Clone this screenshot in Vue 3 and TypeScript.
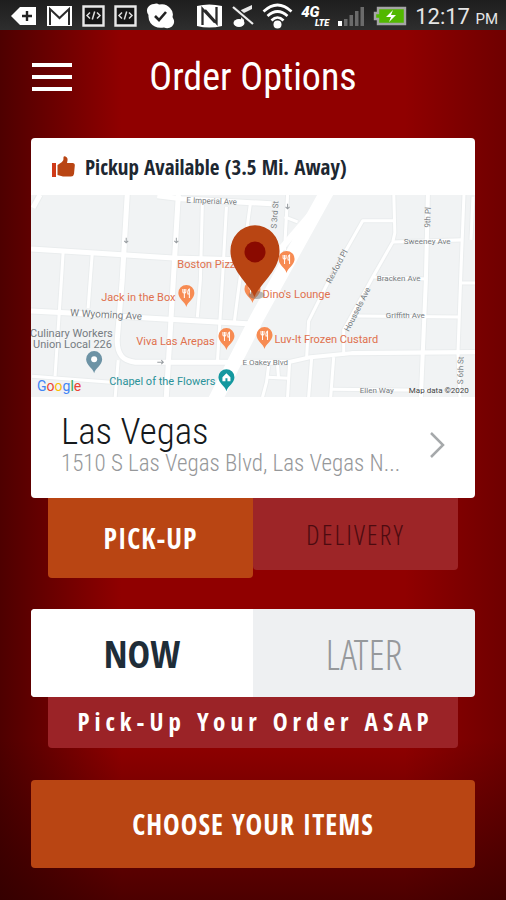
<script setup lang="ts">
import { computed, ref } from 'vue'

type Mode = 'pickup' | 'delivery'
type Timing = 'now' | 'later'

interface Label {
  text: string
  x: number
  y: number
  size?: number
  rotate?: number
  tone: 'street' | 'food' | 'place' | 'chapel' | 'credit'
}

interface Marker {
  x: number
  y: number
  kind: 'food' | 'place' | 'chapel'
}

const mode = ref<Mode>('pickup')
const timing = ref<Timing>('now')

const note = computed<string>(() => {
  const verb = mode.value === 'pickup' ? 'Pick-Up' : 'Deliver'
  return timing.value === 'now' ? `${verb} Your Order ASAP` : `${verb} Your Order Later`
})

// Map geometry, in the map's own coordinate space (443 x 202).
const roads: string[] = [
  'M96 0L91 85L86 145C86 160 92 166 104 167L257 167',
  'M147 0L142 85L135 202',
  'M0 54L142 63L216 65',
  'M0 116L39 118L116 123L220 129',
  'M9 0L2 13',
  'M126 1L150 4L240 9',
]
const lanes: string[] = [
  'M32 58L31 75L24 181',
  'M61 60L57 113',
  'M171 8L169 85L166 122',
  'M195 12L191 85L186 167',
  'M219 8L207 95L203 126',
  'M256 0L253 55',
  'M253 22L266 27',
  'M364 26L331 26L298 84L277 126L275 163',
  'M362 0L363 38L361 47L341 82L312 135L312 160',
  'M361 47L430 45',
  'M342 82L395 84',
  'M326 121L427 122',
  'M430 88L443 88',
  'M432 0L429 75L426 158L428 202',
  'M441 2L439 45',
  'M302 162L299 202',
  'M280 163L277 202',
  'M258 167L256 202',
  'M237 171L235 187L231 202',
  'M236 182L257 183',
  'M246 170L247 183',
  'M300 194L395 195',
  'M1 181L80 187',
  'M87 165L84 202',
]
const avenues: string[] = ['M396 0L394 85L389 202', 'M257 167L279 162L320 158L443 157']

const labels: Label[] = [
  { text: 'E Imperial Ave', x: 155, y: 8, rotate: 2, tone: 'street' },
  { text: 'S 3rd St', x: 245, y: 34, rotate: -86, tone: 'street' },
  { text: '9th Pl', x: 398, y: 33, rotate: -87, tone: 'street' },
  { text: 'Sweeney Ave', x: 372, y: 49, tone: 'street' },
  { text: 'Bracken Ave', x: 345, y: 86, tone: 'street' },
  { text: 'Griffith Ave', x: 354, y: 123, tone: 'street' },
  { text: 'Rexford Pl', x: 299, y: 89, rotate: -62, tone: 'street' },
  { text: 'Houssels Ave', x: 317, y: 137, rotate: -63, tone: 'street' },
  { text: 'W Wyoming Ave', x: 39, y: 121, size: 10, rotate: 3, tone: 'street' },
  { text: 'E Oakey Blvd', x: 211, y: 170, tone: 'street' },
  { text: 'Ellen Way', x: 328, y: 198, tone: 'street' },
  { text: 'S 6th St', x: 431, y: 189, rotate: -89, tone: 'street' },
  { text: 'Boston Pizza', x: 146, y: 73, tone: 'food' },
  { text: 'Jack in the Box', x: 70, y: 106, tone: 'food' },
  { text: "Dino's Lounge", x: 231, y: 103, tone: 'food' },
  { text: 'Viva Las Arepas', x: 105, y: 150, tone: 'food' },
  { text: 'Luv-It Frozen Custard', x: 243, y: 148, tone: 'food' },
  { text: 'Culinary Workers', x: -1, y: 142, tone: 'place' },
  { text: 'Union Local 226', x: 2, y: 153, tone: 'place' },
  { text: 'Chapel of the Flowers', x: 78, y: 190, tone: 'chapel' },
  { text: 'Map data ©2020', x: 377, y: 198, size: 8, tone: 'credit' },
]

const markers: Marker[] = [
  { x: 255, y: 78, kind: 'food' },
  { x: 155, y: 112, kind: 'food' },
  { x: 221, y: 108, kind: 'food' },
  { x: 195, y: 155, kind: 'food' },
  { x: 233, y: 154, kind: 'food' },
  { x: 63, y: 178, kind: 'place' },
  { x: 195, y: 196, kind: 'chapel' },
]
</script>

<template>
  <div class="screen">
    <div class="status" aria-label="Device status">
      <div class="status-group">
        <svg width="26" height="20" viewBox="0 0 26 20">
          <path d="M9 1H25V19H9L0 10Z" fill="#fff" />
          <path d="M16 5V15M11 10H21" stroke="#222" stroke-width="2.4" />
        </svg>
        <svg width="27" height="22" viewBox="0 0 27 22">
          <path d="M1 1H26V21H1Z" fill="#fff" />
          <path d="M4 20V4L13.500 13L23 4V20" fill="none" stroke="#2b2b2b" stroke-width="2" />
        </svg>
        <svg v-for="n in 2" :key="n" width="23" height="22" viewBox="0 0 23 22">
          <path d="M1.500 1.500H21.500V20.500H1.500Z" fill="#161616" stroke="#e8e8e8" stroke-width="2.400" />
          <path d="M8 7.500L5 10.500L8 13.500M15 7.500L18 10.500L15 13.500M12.700 6.500L10.300 14.500" fill="none" stroke="#ddd" stroke-width="1.500" />
        </svg>
        <svg width="29" height="26" viewBox="0 0 29 26">
          <path d="M8 1Q11 0 13 1.500Q20 0 24 5Q28 9 26.500 14Q30 20 26 23.500Q22 26.500 18 24.500Q9 26 4.500 20Q2 16 2.500 12Q0 9 1.500 5Q4 1 8 1Z" fill="#fff" />
          <path d="M9 13L13 17L20 9" fill="none" stroke="#222" stroke-width="2.600" />
        </svg>
      </div>
      <div class="status-group status-right">
        <svg width="29" height="26" viewBox="0 0 29 26">
          <path d="M2 3Q14 0 27 3V23Q14 26 2 23Z" fill="#fff" />
          <path d="M7.500 22V6L20 19.500M21.500 4V20L10 7" fill="none" stroke="#2a2a2a" stroke-width="2.300" />
        </svg>
        <svg width="22" height="24" viewBox="0 0 22 24">
          <path d="M9 17V6L20 1V5L12 9V18Z" fill="#e9e9e9" />
          <ellipse cx="7" cy="19" rx="5.500" ry="4" fill="#fff" />
          <path d="M1 3L21 20" stroke="#2a2a2a" stroke-width="5" />
          <path d="M1 3L21 20" stroke="#eee" stroke-width="2.200" />
        </svg>
        <svg width="31" height="26" viewBox="0 0 31 26">
          <path d="M1.500 8.500Q15.500 -4.500 29.500 8.500M5.500 13Q15.500 4 25.500 13M9.500 17.500Q15.500 11.500 21.500 17.500" fill="none" stroke="#fff" stroke-width="2.700" />
          <circle cx="15.500" cy="21.500" r="4" fill="#fff" />
        </svg>
        <span class="network"><b>4G</b><i>LTE</i></span>
        <svg width="28" height="22" viewBox="0 0 28 22">
          <path d="M1 16H5V21H1Z" fill="#fff" />
          <path d="M7 14H10.500V21H7ZM12.500 10H16V21H12.500ZM18 6H21.500V21H18ZM23.500 2H27V21H23.500Z" fill="#6b6b6b" />
        </svg>
        <svg width="34" height="20" viewBox="0 0 34 20">
          <path d="M5 2H32V18H5V13H2V7H5Z" fill="#52b800" stroke="#a5a5a5" stroke-width="2.400" />
          <path d="M20 4L13 11H18L16 16L23 9H18Z" fill="#fff" />
        </svg>
        <time class="clock">12:17 <small>PM</small></time>
      </div>
    </div>

    <header class="header">
      <button class="menu" type="button" aria-label="Menu"><i></i><i></i><i></i></button>
      <h1>Order Options</h1>
    </header>

    <main>
      <section class="card">
        <p class="available">
          <svg width="23" height="22" viewBox="0 0 23 22">
            <path d="M0 7H4V21H0Z" fill="#cf3a18" />
            <path d="M5.500 9L10 6Q12 4 11.500 1Q12 0 13.500 0.500Q16 1.500 15.500 4.500L15 7H20.500Q23 7.200 22.800 9.500L22 18Q21.500 20.500 19 20.500H11L5.500 19Z" fill="#b94513" />
          </svg>
          Pickup Available (3.5 Mi. Away)
        </p>

        <svg class="map" viewBox="0 0 443 202" preserveAspectRatio="xMidYMid slice" role="img" aria-label="Map of Las Vegas">
          <rect width="443" height="202" fill="#f1f3f4" />
          <g fill="none" stroke="#fff" stroke-linejoin="round">
            <path v-for="d in lanes" :key="d" :d="d" stroke="#eaedee" stroke-width="5" />
            <path v-for="d in roads" :key="d" :d="d" stroke="#eaedee" stroke-width="7" />
            <path v-for="d in avenues" :key="d" :d="d" stroke="#eaedee" stroke-width="6" />
            <path v-for="d in lanes" :key="d" :d="d" stroke-width="3" />
            <path v-for="d in roads" :key="d" :d="d" stroke-width="5" />
            <path v-for="d in avenues" :key="d" :d="d" stroke-width="4" />
            <path d="M298 -8L226 122L180 212" stroke-width="14" />
            <path d="M280 18L244 60" stroke-width="6" />
          </g>
          <path d="M95 43V48M93 46L95 48L97 46M145 43V48M143 46L145 48L147 46M256 9V14M254 12L256 14L258 12M126 167H132M130 165L132 167L130 169" fill="none" stroke="#989da1" />

          <text
            v-for="l in labels"
            :key="l.text"
            :class="l.tone"
            :transform="`translate(${l.x} ${l.y}) rotate(${l.rotate ?? 0})`"
            :font-size="l.size ?? (l.tone === 'street' ? 8 : 11)"
          >{{ l.text }}</text>

          <g v-for="m in markers" :key="`${m.x}-${m.y}`" :transform="`translate(${m.x} ${m.y})`" :class="['marker', m.kind]">
            <path d="M0 0C-1 -5 -8 -8 -8 -14A8 8 0 0 1 8 -14C8 -8 1 -5 0 0Z" />
            <path v-if="m.kind === 'food'" d="M-3.500 -18V-15Q-3.500 -14 -2 -14V-9M-2 -18V-14M-0.500 -18V-15Q-0.500 -14 -2 -14M3 -9V-18Q1 -17 1.500 -13H3" class="glyph" />
            <circle v-else-if="m.kind === 'place'" cy="-14" r="3" fill="#fff" />
            <path v-else d="M-4 -10V-14L0 -18L4 -14V-10H1V-13H-1V-10Z" fill="#fff" />
          </g>

          <ellipse cx="225" cy="100" rx="8" ry="4" fill="#6a6a6a" opacity="0.450" />
          <path d="M223 102C218 89 199 76 199 56A24 25 0 0 1 248 56C248 76 228 89 223 102Z" fill="#b94513" />
          <circle cx="223.500" cy="57" r="10.500" fill="#8a0a00" />

          <text x="6" y="196" class="google">
            <tspan fill="#4285f4">G</tspan><tspan fill="#ea4335">o</tspan><tspan fill="#fbbc05">o</tspan><tspan fill="#4285f4">g</tspan><tspan fill="#34a853">l</tspan><tspan fill="#ea4335">e</tspan>
          </text>
        </svg>

        <a class="store" href="#store">
          <span class="store-text">
            <strong>Las Vegas</strong>
            <span class="address">1510 S Las Vegas Blvd, Las Vegas N...</span>
          </span>
          <svg width="16" height="28" viewBox="0 0 16 28">
            <path d="M2 2L14 14L2 26" fill="none" stroke="#a6a9ab" stroke-width="2.500" />
          </svg>
        </a>
      </section>

      <div class="modes">
        <button type="button" :class="{ active: mode === 'pickup' }" :aria-pressed="mode === 'pickup'" @click="mode = 'pickup'">PICK-UP</button>
        <button type="button" :class="{ active: mode === 'delivery' }" :aria-pressed="mode === 'delivery'" @click="mode = 'delivery'">DELIVERY</button>
      </div>

      <div class="timing">
        <button type="button" :class="{ active: timing === 'now' }" :aria-pressed="timing === 'now'" @click="timing = 'now'">NOW</button>
        <button type="button" :class="{ active: timing === 'later' }" :aria-pressed="timing === 'later'" @click="timing = 'later'">LATER</button>
      </div>
      <p class="note">{{ note }}</p>

      <button class="choose" type="button">CHOOSE YOUR ITEMS</button>
    </main>
  </div>
</template>

<style>
body {
  margin: 0;
  background: #500000;
}
</style>

<style scoped>
.screen {
  min-height: 100vh;
  background:
    linear-gradient(to top, rgba(40, 0, 0, 0.65) 0, rgba(40, 0, 0, 0) 160px),
    linear-gradient(to right, rgba(50, 0, 0, 0.7) 0, rgba(50, 0, 0, 0) 24%),
    linear-gradient(to left, rgba(50, 0, 0, 0.35) 0, rgba(50, 0, 0, 0) 20%),
    #900000;
  font-family: "Roboto Condensed", Roboto, "Liberation Sans", sans-serif;
}

button {
  border: 0;
  padding: 0;
  cursor: pointer;
  background: none;
  font-family: "Open Sans Condensed Light", "Roboto Condensed", sans-serif;
}

svg {
  display: block;
  flex: none;
}

.status {
  display: flex;
  justify-content: space-between;
  align-items: center;
  box-sizing: border-box;
  height: 30px;
  padding: 2px 8px 0 11px;
  background: linear-gradient(#1e1e1e, #2e2e2e);
  color: #e6e6e6;
}

.status-group {
  display: flex;
  align-items: center;
  gap: 9px;
}

.status-right {
  gap: 8px;
}

.network {
  display: flex;
  flex-direction: column;
  width: 28px;
  color: #fff;
  font-family: Roboto, sans-serif;
  font-style: italic;
  font-weight: 900;
}

.network b {
  font-size: 15px;
  line-height: 14px;
}

.network i {
  align-self: flex-end;
  font-size: 9px;
  line-height: 8px;
}

.clock {
  padding-top: 3px;
  font-family: Roboto, sans-serif;
  font-size: 22px;
  line-height: 24px;
  white-space: nowrap;
}

.clock small {
  font-size: 15px;
}

.header {
  display: grid;
  grid-template-columns: 40px 1fr 40px;
  align-items: center;
  height: 94px;
  padding: 0 32px;
  margin-bottom: 14px;
}

.menu {
  display: grid;
  gap: 8px;
}

.menu i {
  height: 4px;
  background: #fff;
}

h1 {
  margin: 0;
  color: #fff;
  font-size: 38px;
  font-weight: 400;
  line-height: 44px;
  text-align: center;
  white-space: nowrap;
}

main {
  padding: 0 31px 31px;
}

.card {
  overflow: hidden;
  border-radius: 4px;
  background: #fff;
}

.available {
  display: flex;
  align-items: center;
  gap: 10px;
  height: 57px;
  margin: 0;
  padding: 0 21px;
  color: #1d2731;
  font-family: "Open Sans Condensed", "Roboto Condensed", sans-serif;
  font-size: 21px;
  font-weight: 700;
}

.map {
  width: 100%;
  height: 202px;
  font-family: Roboto, sans-serif;
}

.street {
  fill: #777c80;
}

.food {
  fill: #e0714e;
}

.place {
  fill: #767c82;
}

.chapel {
  fill: #2a9299;
}

.credit {
  fill: #444;
}

.marker.food {
  fill: #f78b52;
}

.marker.place {
  fill: #6d93a5;
}

.marker.chapel {
  fill: #14989f;
}

.glyph {
  fill: none;
  stroke: #fff;
}

.google {
  font-size: 14px;
  font-weight: 400;
}

.store {
  display: flex;
  align-items: center;
  justify-content: space-between;
  gap: 16px;
  box-sizing: border-box;
  height: 101px;
  padding: 0 30px 6px;
  color: #15191c;
  text-decoration: none;
}

.store-text {
  display: grid;
  min-width: 0;
}

.store strong {
  font-size: 37px;
  font-weight: 300;
  line-height: 38px;
}

.address {
  overflow: hidden;
  color: #96989a;
  font-size: 23px;
  font-weight: 300;
  line-height: 26px;
  text-overflow: ellipsis;
  white-space: nowrap;
}

.modes {
  display: grid;
  grid-template-columns: 1fr 1fr;
  align-items: start;
  height: 80px;
  margin: 0 17px 31px;
}

.modes button {
  height: 72px;
  border-radius: 0 0 4px 4px;
  background: #9d2527;
  color: #4c0b10;
  font-size: 28px;
  font-weight: 300;
  letter-spacing: 2px;
}

.modes .active {
  height: 80px;
  background: #b94513;
  color: #fff;
  font-family: "Open Sans Condensed", "Roboto Condensed", sans-serif;
  font-size: 28px;
  font-weight: 700;
  letter-spacing: 1px;
}

.timing {
  display: grid;
  grid-template-columns: 1fr 1fr;
  overflow: hidden;
  border-radius: 4px;
  background: #eef0f2;
}

.timing button {
  height: 88px;
  color: #96999c;
  font-size: 42px;
  font-weight: 300;
}

.timing .active {
  background: #fff;
  color: #1f2d38;
  font-family: "Open Sans Condensed", "Roboto Condensed", sans-serif;
  font-size: 38px;
  font-weight: 700;
}

.note {
  height: 51px;
  margin: 0 17px 32px;
  border-radius: 0 0 4px 4px;
  background: #9b2327;
  color: #fff;
  font-family: "Open Sans Condensed", "Roboto Condensed", sans-serif;
  font-size: 25px;
  font-weight: 700;
  letter-spacing: 5px;
  line-height: 49px;
  text-align: center;
  text-indent: 5px;
  white-space: nowrap;
}

.choose {
  width: 100%;
  height: 88px;
  border-radius: 4px;
  background: #b94513;
  color: #fff;
  font-family: "Open Sans Condensed", "Roboto Condensed", sans-serif;
  font-size: 28px;
  font-weight: 700;
  letter-spacing: 1px;
}
</style>
